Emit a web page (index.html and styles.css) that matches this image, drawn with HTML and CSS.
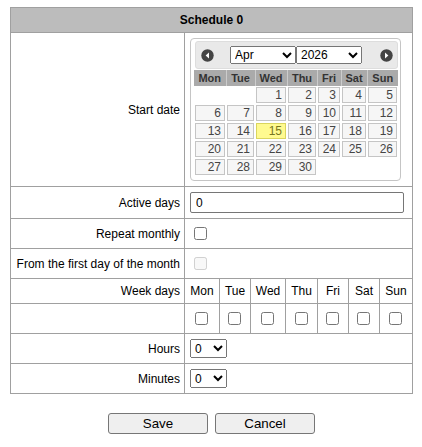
FILE: index.html
```html
<!DOCTYPE html>
<html>
<head>
<meta charset="utf-8">
<link rel="stylesheet" href="styles.css">
</head>
<body>
<div class="form">
  <div class="hdr">Schedule 0</div>

  <div class="lbl">Start date</div>
  <div class="val val-date">
    <div class="dp">
      <div class="dp-head">
        <span class="nav prev"><svg width="13" height="13" viewBox="0 0 13 13"><circle cx="6.5" cy="6.5" r="6.2" fill="#444"/><path d="M8 3.5 L4.6 6.5 L8 9.5 Z" fill="#fff"/></svg></span>
        <div class="dp-sel">
          <select class="dsel"><option>Apr</option></select><select class="dsel"><option>2026</option></select>
        </div>
        <span class="nav next"><svg width="13" height="13" viewBox="0 0 13 13"><circle cx="6.5" cy="6.5" r="6.2" fill="#444"/><path d="M5 3.5 L8.4 6.5 L5 9.5 Z" fill="#fff"/></svg></span>
      </div>
      <table class="cal">
        <colgroup><col class="c32"><col class="c29"><col class="c32"><col class="c30"><col class="c24"><col class="c26"><col class="c31"></colgroup>
        <thead><tr><th>Mon</th><th>Tue</th><th>Wed</th><th>Thu</th><th>Fri</th><th>Sat</th><th>Sun</th></tr></thead>
        <tbody>
          <tr><td></td><td></td><td><a>1</a></td><td><a>2</a></td><td><a>3</a></td><td><a>4</a></td><td><a>5</a></td></tr>
          <tr><td><a>6</a></td><td><a>7</a></td><td><a>8</a></td><td><a>9</a></td><td><a>10</a></td><td><a>11</a></td><td><a>12</a></td></tr>
          <tr><td><a>13</a></td><td><a>14</a></td><td><a class="today">15</a></td><td><a>16</a></td><td><a>17</a></td><td><a>18</a></td><td><a>19</a></td></tr>
          <tr><td><a>20</a></td><td><a>21</a></td><td><a>22</a></td><td><a>23</a></td><td><a>24</a></td><td><a>25</a></td><td><a>26</a></td></tr>
          <tr><td><a>27</a></td><td><a>28</a></td><td><a>29</a></td><td><a>30</a></td><td></td><td></td><td></td></tr>
        </tbody>
      </table>
    </div>
  </div>

  <div class="lbl">Active days</div>
  <div class="val"><input class="txt" type="text" value="0"></div>

  <div class="lbl">Repeat monthly</div>
  <div class="val"><input class="chk" type="checkbox"></div>

  <div class="lbl">From the first day of the month</div>
  <div class="val"><input class="chk" type="checkbox" disabled></div>

  <div class="lbl">Week days</div>
  <div class="day">Mon</div>
  <div class="day">Tue</div>
  <div class="day">Wed</div>
  <div class="day">Thu</div>
  <div class="day">Fri</div>
  <div class="day">Sat</div>
  <div class="day">Sun</div>

  <div class="lbl"></div>
  <div class="day"><input class="chk0" type="checkbox"></div>
  <div class="day"><input class="chk0" type="checkbox"></div>
  <div class="day"><input class="chk0" type="checkbox"></div>
  <div class="day"><input class="chk0" type="checkbox"></div>
  <div class="day"><input class="chk0" type="checkbox"></div>
  <div class="day"><input class="chk0" type="checkbox"></div>
  <div class="day"><input class="chk0" type="checkbox"></div>

  <div class="lbl">Hours</div>
  <div class="val"><select class="num"><option>0</option></select></div>

  <div class="lbl">Minutes</div>
  <div class="val"><select class="num"><option>0</option></select></div>
</div>
<div class="buttons">
  <button class="btn">Save</button>
  <button class="btn">Cancel</button>
</div>
</body>
</html>
```
FILE: styles.css
```css
html, body {
  margin: 0;
  padding: 0;
  background: #fff;
}
body {
  font-family: "Liberation Sans", Arial, sans-serif;
  font-size: 12px;
  color: #000;
}
.form {
  display: grid;
  grid-template-columns: 173px 34px 30px 34px 31px 30px 30px 32px;
  grid-template-rows: 24px 153px 31px 29px 29px 24px 29px 29px 29px;
  gap: 1px;
  background: #a0a0a0;
  border: 1px solid #a0a0a0;
  width: 401px;
  margin: 7px 0 0 10px;
}
.form > div {
  background: #fff;
}
.form > .hdr {
  grid-column: 1 / -1;
  background: #bcbcbc;
  font-weight: bold;
  display: flex;
  align-items: center;
  justify-content: center;
}
.lbl {
  display: flex;
  align-items: center;
  justify-content: flex-end;
  padding-right: 4px;
  white-space: nowrap;
}
.val {
  grid-column: span 7;
  display: flex;
  align-items: center;
  padding-left: 5px;
}
.val-date {
  align-items: flex-start;
  padding-top: 5px;
}
.day {
  display: flex;
  align-items: center;
  justify-content: center;
}
.txt {
  box-sizing: border-box;
  width: 214px;
  height: 21px;
  margin: 0;
  border: 1px solid #767676;
  border-radius: 2px;
  padding: 1px 5px;
  font-family: "Liberation Sans", Arial, sans-serif;
  font-size: 12px;
}
.chk {
  width: 13px;
  height: 13px;
  margin: 0 0 0 4px;
}
.chk0 {
  width: 13px;
  height: 13px;
  margin: 0 0 0 -1px;
}
.num {
  box-sizing: border-box;
  width: 37px;
  height: 19px;
  margin: 0;
  font-family: "Liberation Sans", Arial, sans-serif;
  font-size: 12px;
}

/* datepicker */
.dp {
  box-sizing: border-box;
  width: 211px;
  border: 1px solid #c5c5c5;
  border-radius: 4px;
  padding: 2px 2px 4px 3px;
}
.dp-head {
  box-sizing: border-box;
  height: 28px;
  border: 1px solid #ddd;
  border-radius: 3px;
  background: #e9e9e9;
  display: grid;
  grid-template-columns: 1fr auto 1fr;
  align-items: center;
  padding: 0 4px 0 5px;
  margin-left: 1px;
  margin-bottom: 1px;
}
.nav {
  display: flex;
  width: 13px;
  height: 13px;
}
.next {
  justify-self: end;
}
.dp-sel {
  display: flex;
  margin-right: 2px;
}
.dsel {
  box-sizing: border-box;
  width: 66px;
  height: 18px;
  margin: 0;
  font-family: "Liberation Sans", Arial, sans-serif;
  font-size: 12px;
}
.cal {
  border-collapse: collapse;
  table-layout: fixed;
  width: 204px;
}
.c32 { width: 32px; }
.c29 { width: 29px; }
.c30 { width: 30px; }
.c24 { width: 24px; }
.c26 { width: 26px; }
.c31 { width: 31px; }
.cal th {
  height: 16px;
  padding: 0;
  background: #aaa;
  border-left: 1px solid #ccc;
  color: #333;
  font-weight: bold;
  font-size: 11px;
  text-align: center;
}
.cal th:first-child {
  border-left: 0;
}
.cal td {
  padding: 1px;
  height: 16px;
}
.cal td a {
  display: block;
  box-sizing: border-box;
  height: 16px;
  line-height: 14px;
  border: 1px solid #c5c5c5;
  background: #f6f6f6;
  color: #454545;
  text-align: right;
  padding: 0 3px 0 0;
  font-size: 12px;
}
.cal td a.today {
  border-color: #dad55e;
  background: #fffa90;
  color: #777620;
}

.buttons {
  display: flex;
  justify-content: center;
  gap: 7px;
  margin-top: 19px;
  padding-left: 1px;
}
.btn {
  box-sizing: border-box;
  width: 100px;
  height: 21px;
  margin: 0;
  padding: 0;
  border: 1px solid #767676;
  border-radius: 3px;
  background: #efefef;
  color: #000;
  font-family: "Liberation Sans", Arial, sans-serif;
  font-size: 13.33px;
}
```
